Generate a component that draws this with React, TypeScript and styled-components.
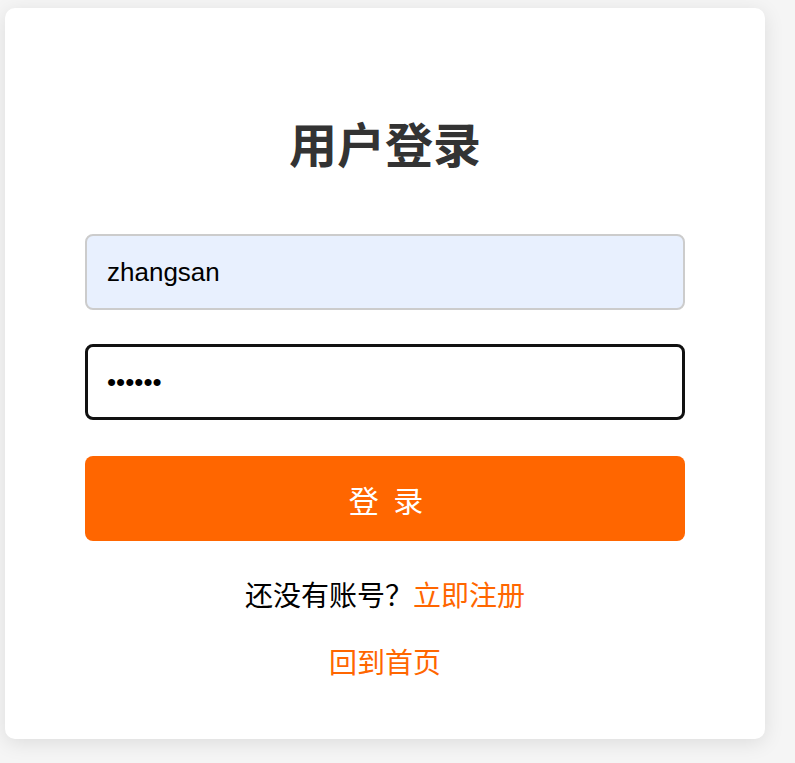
import React, { useState } from 'react';
import styled, { createGlobalStyle } from 'styled-components';

const GlobalStyle = createGlobalStyle`
  html, body {
    margin: 0;
    padding: 0;
    background: #f5f5f5;
    font-family: "Liberation Sans", "Noto Sans CJK SC", Arial, sans-serif;
  }
`;

const Page = styled.div`
  display: flex;
  align-items: flex-start;
  padding: 8px 30px 24px 5px;
`;

const Card = styled.div`
  width: 760px;
  box-sizing: border-box;
  padding: 105px 80px 61px;
  background: #fff;
  border-radius: 10px;
  box-shadow: 0 4px 20px rgba(0, 0, 0, 0.1);
  display: flex;
  flex-direction: column;
  align-items: center;
`;

const Title = styled.h1`
  margin: 0 0 63px;
  font-size: 48px;
  line-height: 58px;
  font-weight: bold;
  color: #333;
  font-family: "Noto Sans CJK SC", "Liberation Sans", sans-serif;
`;

const Form = styled.form`
  width: 600px;
  display: flex;
  flex-direction: column;
`;

const Input = styled.input<{ $focused?: boolean; $filled?: boolean }>`
  box-sizing: border-box;
  width: 100%;
  height: 76px;
  margin-bottom: ${(p) => (p.$focused ? '36px' : '34px')};
  padding: 0 20px;
  font-size: 26px;
  font-family: "Liberation Sans", Arial, sans-serif;
  color: #000;
  border-radius: 8px;
  outline: none;
  border: ${(p) => (p.$focused ? '3px solid #111' : '2px solid #ccc')};
  padding-left: ${(p) => (p.$focused ? '19px' : '20px')};
  background: ${(p) => (p.$filled ? '#e8f0fe' : '#fff')};
`;

const SubmitButton = styled.button`
  height: 85px;
  border: none;
  border-radius: 8px;
  padding: 0 0 0 6px;
  background: #ff6600;
  color: #fff;
  font-size: 30px;
  letter-spacing: 4px;
  font-family: "Noto Sans CJK SC", sans-serif;
  cursor: pointer;
`;

const Hint = styled.p`
  margin: 36px 0 0;
  font-size: 28px;
  line-height: 34px;
  color: #000;
  font-family: "Noto Sans CJK SC", sans-serif;
`;

const Link = styled.a`
  color: #ff6600;
  text-decoration: none;
  cursor: pointer;
`;

const HomeLink = styled(Link)`
  margin-top: 33px;
  font-size: 28px;
  line-height: 34px;
  font-family: "Noto Sans CJK SC", sans-serif;
`;

const App: React.FC = () => {
  const [username, setUsername] = useState('zhangsan');
  const [password, setPassword] = useState('123456');

  return (
    <>
      <GlobalStyle />
      <Page>
        <Card>
          <Title>用户登录</Title>
          <Form onSubmit={(e) => e.preventDefault()}>
            <Input
              $filled
              value={username}
              onChange={(e) => setUsername(e.target.value)}
              placeholder="用户名"
            />
            <Input
              $focused
              autoFocus
              type="password"
              value={password}
              onChange={(e) => setPassword(e.target.value)}
              placeholder="密码"
            />
            <SubmitButton type="submit">登 录</SubmitButton>
          </Form>
          <Hint>
            还没有账号？<Link>立即注册</Link>
          </Hint>
          <HomeLink>回到首页</HomeLink>
        </Card>
      </Page>
    </>
  );
};

export default App;
